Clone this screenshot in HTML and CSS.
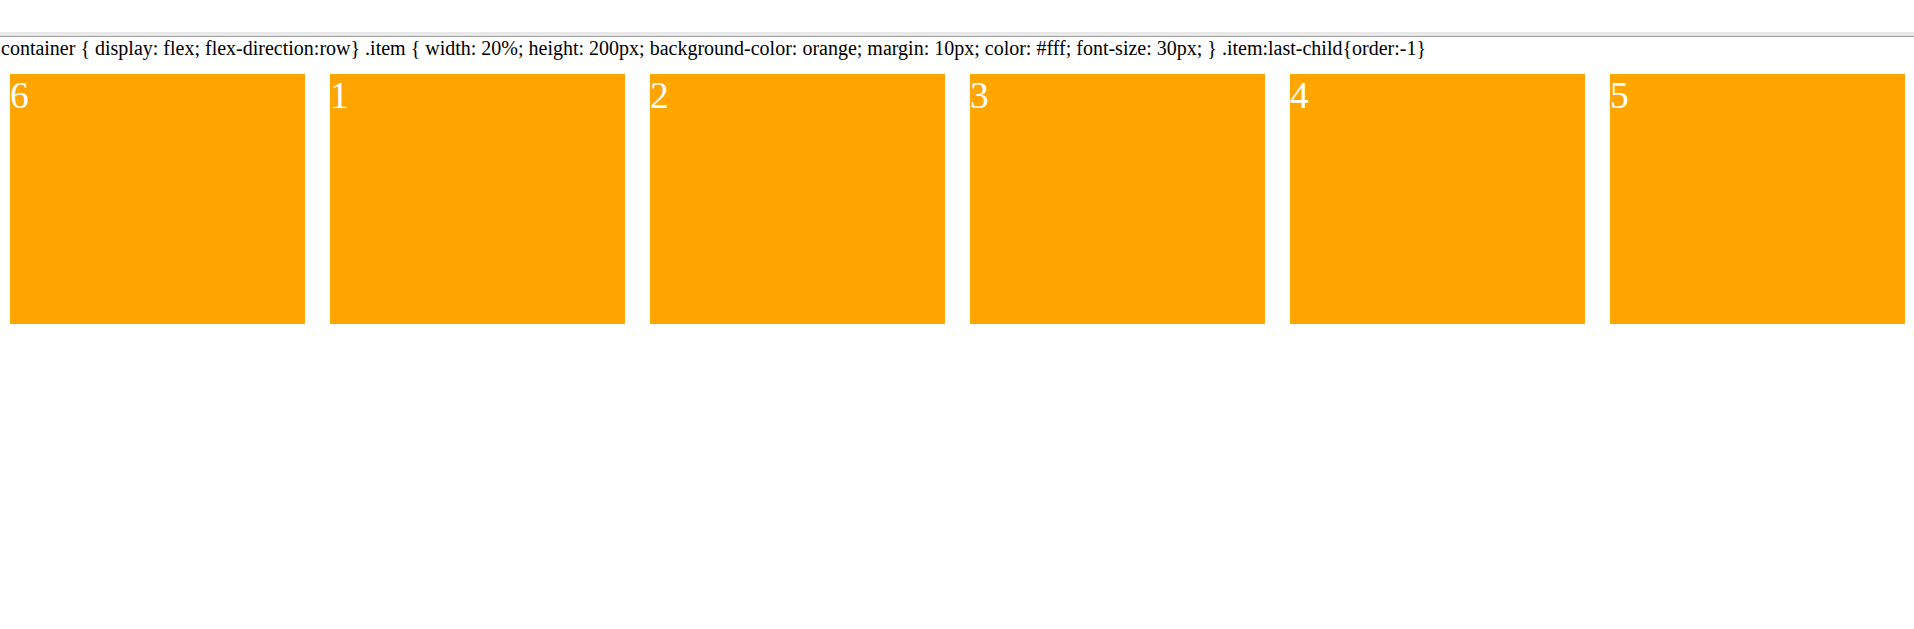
FILE: index.html
```html
<!DOCTYPE html>
<html>
<head>
<meta charset="utf-8">
<link rel="stylesheet" href="styles.css">
</head>
<body>
<div class="topbar"></div>
<p class="code">.container { display: flex; flex-direction:row} .item { width: 20%; height: 200px; background-color: orange; margin: 10px; color: #fff; font-size: 30px; } .item:last-child{order:-1}</p>
<div class="container">
  <div class="item">1</div>
  <div class="item">2</div>
  <div class="item">3</div>
  <div class="item">4</div>
  <div class="item">5</div>
  <div class="item">6</div>
</div>
</body>
</html>
```
FILE: styles.css
```css
html, body {
  margin: 0;
  padding: 0;
  background: #fff;
}
body {
  font-family: "Liberation Serif", "Times New Roman", serif;
  color: #000;
  overflow: hidden;
}
.topbar {
  margin-top: 32px;
  height: 4px;
  background: #e8e8e8;
  border-bottom: 1px solid #a0a0a0;
}
.code {
  margin: 0 0 0 -4px;
  font-size: 20px;
  line-height: 23px;
  white-space: nowrap;
}
.container {
  display: flex;
  flex-direction: row;
  gap: 25px;
  padding-left: 10px;
  margin-top: 14px;
}
.item {
  flex: none;
  width: 295px;
  height: 250px;
  background-color: orange;
  color: #fff;
  font-size: 37.5px;
}
.item:last-child {
  order: -1;
}
```
